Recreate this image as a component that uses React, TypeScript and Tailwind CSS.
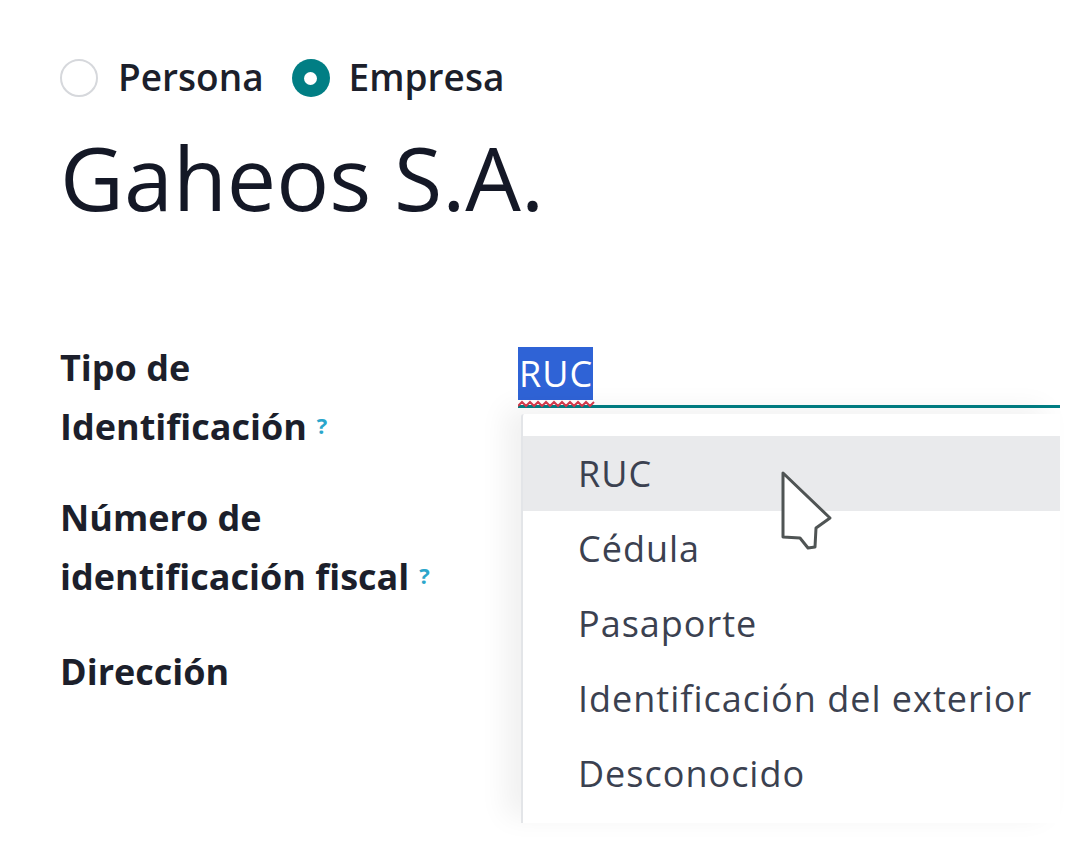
import React from "react";

const options = ["RUC", "Cédula", "Pasaporte", "Identificación del exterior", "Desconocido"];

function Help() {
  return (
    <sup className="ml-[10px] text-[22px] font-bold text-[#2ba6cb] relative -top-[6px] tracking-normal">?</sup>
  );
}

function Cursor() {
  return (
    <svg
      className="absolute z-20 left-[780px] top-[470px]"
      width="56"
      height="84"
      viewBox="0 0 56 84"
      fill="none"
    >
      <path
        d="M3 3 L3 67 L20 68 L28 78 L35 77 L36 58 L50 48 Z"
        fill="#ffffff"
        stroke="#4f5454"
        strokeWidth="3"
        strokeLinejoin="round"
      />
    </svg>
  );
}

export default function App() {
  return (
    <div className="relative w-[1090px] h-[854px] overflow-hidden bg-white font-['Open_Sans','Noto_Sans',sans-serif] text-[#1c1f2b]">
      <div className="pl-[60px] pt-[57px]">
        {/* Company type */}
        <div className="flex items-center h-[42px] text-[37px] font-semibold leading-none">
          <span className="w-[38px] h-[38px] rounded-full border-2 border-[#d6d8dc] bg-white" />
          <span className="ml-[20px] relative -top-[2px]">Persona</span>
          <span className="ml-[28px] w-[38px] h-[38px] rounded-full bg-[#017e84] flex items-center justify-center">
            <span className="w-[13px] h-[13px] rounded-full bg-white" />
          </span>
          <span className="ml-[19px] relative -top-[2px]">Empresa</span>
        </div>

        <h1 className="mt-[28px] text-[88px] leading-[100px] font-normal text-[#141826]">Gaheos S.A.</h1>

        {/* Form */}
        <div className="mt-[111px] grid grid-cols-[458px_1fr] w-[1000px]">
          <div className="text-[36px] font-bold leading-[59px]">
            Tipo de
            <br />
            Identificación
            <Help />
          </div>
          <div className="relative pt-[9px]">
            <div className="h-[61px] border-b-[3px] border-[#017e84]">
              <span className="relative inline-block bg-[#2f63d6] text-white text-[36px] tracking-[1px] leading-[53px] pl-[1px]">
                RUC
                <svg className="absolute left-0 -bottom-[8px]" width="78" height="8" viewBox="0 0 78 8">
                  <path
                    d="M0 6 L4 2 L8 6 L12 2 L16 6 L20 2 L24 6 L28 2 L32 6 L36 2 L40 6 L44 2 L48 6 L52 2 L56 6 L60 2 L64 6 L68 2 L72 6 L76 2"
                    stroke="#d43b4c"
                    strokeWidth="2"
                    fill="none"
                  />
                </svg>
              </span>
            </div>
            <ul className="absolute left-[3px] right-0 top-[76px] z-10 bg-white border-l-2 border-[#e3e5e8] rounded-tl-[3px] shadow-[-16px_-6px_28px_rgba(0,0,0,0.06)] pt-[22px] pb-[12px] text-[36px] tracking-[1px] text-[#3b4150]">
              {options.map((o, i) => (
                <li
                  key={o}
                  className={`h-[75px] leading-[75px] pl-[55px] ${i === 0 ? "bg-[#e9eaec]" : ""}`}
                >
                  {o}
                </li>
              ))}
            </ul>
          </div>

          <div className="mt-[32px] text-[36px] font-bold leading-[59px]">
            Número de
            <br />
            identificación fiscal
            <Help />
          </div>
          <div />

          <div className="mt-[36px] text-[36px] font-bold leading-[59px]">Dirección</div>
          <div />
        </div>
      </div>
      <Cursor />
    </div>
  );
}
